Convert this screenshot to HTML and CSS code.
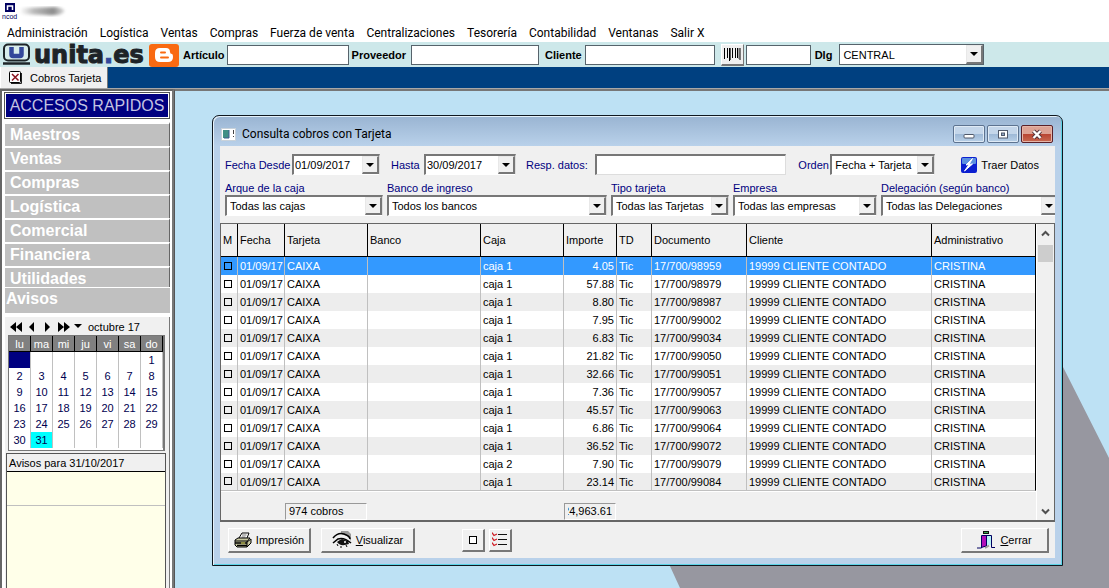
FILE: index.html
```html
<!DOCTYPE html>
<html lang="es">
<head>
<meta charset="utf-8">
<title>Cobros Tarjeta</title>
<link rel="stylesheet" href="styles.css">
</head>
<body>
<header class="app-title">
  <svg width="70" height="20" viewBox="0 0 70 20" aria-hidden="true">
    <defs>
      <linearGradient id="smear"><stop offset="0" stop-color="#fff"/><stop offset=".3" stop-color="#bbb"/><stop offset=".75" stop-color="#8c8c8c"/><stop offset="1" stop-color="#ddd"/></linearGradient>
      <filter id="soft"><feGaussianBlur stdDeviation="1.6"/></filter>
    </defs>
    <rect x="5" y="3" width="10" height="9" fill="#000060"/>
    <path d="M7.500 10V6h5v4" fill="none" stroke="#fff" stroke-width="1.500"/>
    <text x="2" y="19" class="brand-mini">ncod</text>
    <path d="M20 8L56 7Q68 9 63 13Q58 16 46 15L20 14Z" fill="url(#smear)" filter="url(#soft)"/>
  </svg>
</header>
<nav class="menubar">
  <a href="#">Administración</a><a href="#">Logística</a><a href="#">Ventas</a><a href="#">Compras</a><a href="#">Fuerza de venta</a><a href="#">Centralizaciones</a><a href="#">Tesorería</a><a href="#">Contabilidad</a><a href="#">Ventanas</a><a href="#">Salir X</a>
</nav>
<div class="toolbar">
  <svg class="logo" width="180" height="25" viewBox="0 0 180 25" role="img" aria-label="unita.es">
    <rect x="4" y="2.500" width="25" height="16" rx="4" fill="#d8ecec" stroke="#1d2327" stroke-width="2"/>
    <path d="M3 21.500H30" stroke="#1d2327" stroke-width="2.500"/>
    <path d="M11.500 5V12.500Q11.500 14 13 14H20Q21.500 14 21.500 12.500V5" fill="none" stroke="#33479b" stroke-width="4.500"/>
    <text x="34" y="21" class="brand">unita<tspan class="brand-dot">.</tspan>es</text>
    <rect x="149" y="2" width="30" height="23" rx="3" fill="#f96a12"/>
    <path d="M160 6H166Q170 6 170 10Q170 12 172 12Q173 12 173 15Q173 20 168 20H160Q155 20 155 15V11Q155 6 160 6Z" fill="#fff"/>
    <path d="M161 10.500H165M161 15.500H168" stroke="#f96a12" stroke-width="2" stroke-linecap="round"/>
  </svg>
  <label for="articulo">Artículo</label><input id="articulo" class="tb-input w-art" type="text">
  <label for="proveedor" class="gap-r">Proveedor</label><input id="proveedor" class="tb-input w-prov" type="text">
  <label for="cliente" class="gap-l">Cliente</label><input id="cliente" class="tb-input w-cli" type="text">
  <button class="barcode" type="button" aria-label="Código de barras">
    <svg width="17" height="13" viewBox="0 0 17 13"><path d="M.5 0V11M3.500 0V10M5.500 0V13M8.500 0V10M11.500 0V10M13.500 0V10M16 0V12" stroke="#000"/><path d="M6.500 0V12M15 0V11" stroke="#555"/></svg>
  </button>
  <input class="tb-input w-code" type="text" aria-label="Código">
  <label for="dlg">Dlg</label>
  <span class="combo combo-flat w-dlg"><select id="dlg"><option>CENTRAL</option></select><span class="arrow"></span></span>
</div>
<div class="tabs">
  <button class="tab" type="button">
    <svg width="13" height="13" viewBox="0 0 13 13"><rect x=".5" y=".5" width="11" height="11" rx="1" fill="#fff" stroke="#000"/><path d="M12.500 2V12.500H2" fill="none" stroke="#222"/><path d="M3 3L9.500 9.500M9.500 3L3 9.500" stroke="#8b1420" stroke-width="1.500"/></svg>
    Cobros Tarjeta
  </button>
</div>
<main class="workspace">
  <aside class="sidebar">
    <h1 class="quick">ACCESOS RAPIDOS</h1>
    <nav class="quick-list">
      <button type="button">Maestros</button><button type="button">Ventas</button><button type="button">Compras</button><button type="button">Logística</button><button type="button">Comercial</button><button type="button">Financiera</button><button type="button">Utilidades</button>
    </nav>
    <h2 class="notices">Avisos</h2>
    <section class="calendar">
      <div class="cal-nav">
        <button type="button" aria-label="Año anterior"><svg width="12" height="10"><path d="M6 0V10L0 5ZM12 0V10L6 5Z"/></svg></button>
        <button type="button" aria-label="Mes anterior"><svg width="12" height="10"><path d="M8 0V10L3 5Z"/></svg></button>
        <button type="button" aria-label="Mes siguiente"><svg width="12" height="10"><path d="M3 0V10L8 5Z"/></svg></button>
        <button type="button" aria-label="Año siguiente"><svg width="12" height="10"><path d="M0 0V10L6 5ZM6 0V10L12 5Z"/></svg></button>
        <button type="button" aria-label="Elegir mes"><svg width="8" height="10"><path d="M0 2H8L4 6Z"/></svg></button>
        <span>octubre 17</span>
      </div>
      <table class="cal">
        <thead><tr><th>lu</th><th>ma</th><th>mi</th><th>ju</th><th>vi</th><th>sa</th><th>do</th></tr></thead>
        <tbody>
          <tr><td class="cur"></td><td></td><td></td><td></td><td></td><td></td><td>1</td></tr>
          <tr><td>2</td><td>3</td><td>4</td><td>5</td><td>6</td><td>7</td><td>8</td></tr>
          <tr><td>9</td><td>10</td><td>11</td><td>12</td><td>13</td><td>14</td><td>15</td></tr>
          <tr><td>16</td><td>17</td><td>18</td><td>19</td><td>20</td><td>21</td><td>22</td></tr>
          <tr><td>23</td><td>24</td><td>25</td><td>26</td><td>27</td><td>28</td><td>29</td></tr>
          <tr><td>30</td><td class="today">31</td><td></td><td></td><td></td><td></td><td></td></tr>
        </tbody>
      </table>
      <div class="notes">
        <div class="notes-head">Avisos para 31/10/2017</div>
        <div class="notes-row"></div>
      </div>
    </section>
  </aside>
  <section class="desktop">
    <svg class="wallpaper" width="934" height="497" viewBox="0 0 934 497" aria-hidden="true"><path d="M494 473L505 497H934V367L888 276L800 100L400 100Z" fill="#9797a0"/></svg>
    <section class="window">
      <header class="win-title">
        <svg width="15" height="13" viewBox="0 0 15 13"><rect x=".5" y=".5" width="14" height="12" fill="#fff" stroke="#c9d2da"/><rect x="2" y="2" width="6" height="8" fill="#3f8f86"/><path d="M8 2V10H3" fill="none" stroke="#3a5a90"/><path d="M12.500 2V6M12.500 8V9" stroke="#444"/></svg>
        <h2>Consulta cobros con Tarjeta</h2>
        <button type="button" aria-label="Minimizar"><svg width="12" height="12"><rect x="1" y="6.500" width="10" height="3.500" rx="1" fill="#fff" stroke="#50596a"/></svg></button>
        <button type="button" aria-label="Maximizar"><svg width="12" height="12"><rect x="1.500" y="2.500" width="9" height="7.500" fill="#fff" stroke="#50596a"/><rect x="4.500" y="5" width="3" height="2.500" fill="#8fa6c4" stroke="#50596a"/></svg></button>
        <button type="button" class="close" aria-label="Cerrar ventana"><svg width="12" height="12"><path d="M2.500 3L9.500 10M9.500 3L2.500 10" stroke="#4c3038" stroke-width="4"/><path d="M2.500 3L9.500 10M9.500 3L2.500 10" stroke="#fff" stroke-width="2.400"/></svg></button>
      </header>
      <div class="win-body">
        <form class="filters">
          <div class="filter-row">
            <label for="desde" class="w-lab">Fecha Desde</label>
            <span class="combo w-date"><input id="desde" type="text" value="01/09/2017"><span class="arrow"></span></span>
            <label for="hasta" class="lab-hasta">Hasta</label>
            <span class="combo w-date2"><input id="hasta" type="text" value="30/09/2017"><span class="arrow"></span></span>
            <label for="resp" class="lab-resp">Resp. datos:</label>
            <input id="resp" class="sunken" type="text">
            <label for="orden" class="lab-orden">Orden</label>
            <span class="combo w-orden"><select id="orden"><option>Fecha + Tarjeta</option></select><span class="arrow"></span></span>
            <button type="button" class="fetch">
              <svg width="16" height="16" viewBox="0 0 16 16"><rect width="16" height="16" rx="2" fill="#0b1fd0"/><rect x="1" y="1" width="14" height="6" rx="1" fill="#5b8fe0"/><path d="M11.500 1.500L5 8L8 7.500L3.500 14L11.500 7L8 7.500Z" fill="#fff" stroke="#fff"/></svg>
              Traer Datos</button>
          </div>
          <div class="filter-row second">
            <div class="field w-f1"><label for="f1">Arque de la caja</label><span class="combo"><select id="f1"><option>Todas las cajas</option></select><span class="arrow"></span></span></div>
            <div class="field w-f2"><label for="f2">Banco de ingreso</label><span class="combo"><select id="f2"><option>Todos los bancos</option></select><span class="arrow"></span></span></div>
            <div class="field w-f3"><label for="f3">Tipo tarjeta</label><span class="combo"><select id="f3"><option>Todas las Tarjetas</option></select><span class="arrow"></span></span></div>
            <div class="field w-f4"><label for="f4">Empresa</label><span class="combo"><select id="f4"><option>Todas las empresas</option></select><span class="arrow"></span></span></div>
            <div class="field w-f5"><label for="f5">Delegación (según banco)</label><span class="combo"><select id="f5"><option>Todas las Delegaciones</option></select><span class="arrow"></span></span></div>
          </div>
        </form>
        <div class="grid-box">
          <div class="grid-main">
            <table class="grid">
              <colgroup><col class="c-m"><col class="c-fecha"><col class="c-tarj"><col class="c-banco"><col class="c-caja"><col class="c-imp"><col class="c-td"><col class="c-doc"><col><col class="c-adm"></colgroup>
              <thead><tr><th>M</th><th>Fecha</th><th>Tarjeta</th><th>Banco</th><th>Caja</th><th>Importe</th><th>TD</th><th>Documento</th><th>Cliente</th><th>Administrativo</th></tr></thead>
              <tbody id="rows"></tbody>
            </table>
            <div class="totals"><output class="total-count">974 cobros</output><output class="total-sum"><span>24,963.61</span></output></div>
          </div>
          <div class="scroll">
            <svg width="9" height="7"><path d="M1 5.500L4.500 2L8 5.500" fill="none" stroke="#505050" stroke-width="2"/></svg>
            <div class="thumb"></div>
            <svg width="9" height="7"><path d="M1 1.500L4.500 5L8 1.500" fill="none" stroke="#505050" stroke-width="2"/></svg>
          </div>
        </div>
        <footer class="actions">
          <button type="button" class="raised w-print">
            <svg width="18" height="16" viewBox="0 0 18 16"><path d="M5 6L8 1H15L13 6" fill="#fff" stroke="#000"/><path d="M8 3H12.500M7.500 5H11.500" stroke="#777"/><path d="M1 8L4 6H16L13.500 9H1ZM1 9V13L3 15H13V9M13 15L17 11V7L13 10" fill="#c8c8a0" stroke="#000"/><path d="M1 11H13M3 13.500H13" stroke="#000" stroke-width="1.500"/><path d="M7 11H11" stroke="#e6e65a"/></svg>
            Impresión</button>
          <button type="button" class="raised w-view">
            <svg width="20" height="17" viewBox="0 0 20 17"><path d="M9 0H16L19 3V10L15 5L9 3Z" fill="#999"/><path d="M1 7Q6 1 12 3T18 8" fill="none" stroke="#000" stroke-width="1.600"/><path d="M1 12L6 8Q12 6 19 12" fill="none" stroke="#000" stroke-width="1.600"/><path d="M5 11Q8 16 17 13L16 10L10 8L8 9Z" fill="#111"/><circle cx="13" cy="11" r="1" fill="#fff"/><path d="M5 13L6 15M9 15V17M14 14L15 16" stroke="#000"/></svg>
            <span><u>V</u>isualizar</span></button>
          <button type="button" class="raised square first" aria-label="Desmarcar todo"><svg width="10" height="10"><rect x="1.500" y="1.500" width="7" height="7" fill="#fff" stroke="#000"/></svg></button>
          <button type="button" class="raised square" aria-label="Marcar todo"><svg width="16" height="15" viewBox="0 0 16 15"><path d="M6 2.500H15M6 7.500H15M6 12.500H15" stroke="#111"/><path d="M0 .5L2 3.500L5 2M0 5.500L2 8.500L5 7M0 10.500L2 13.500L5 12" fill="none" stroke="#d01c24" stroke-width="1.300"/></svg></button>
          <button type="button" class="raised w-close">
            <svg width="18" height="18" viewBox="0 0 18 18"><rect x="6.500" y=".5" width="5" height="2" fill="#35b050" stroke="#111"/><path d="M0 17H4.500V4.500H14.500V16.500H18" fill="none" stroke="#000060"/><rect x="5" y="5" width="4" height="11" fill="#b010b8"/><rect x="9" y="5" width="5" height="9" fill="#b8f2f6"/><path d="M9.500 5V15M4.500 16.500L9 15" stroke="#000060"/><path d="M8 17L12 14.500" stroke="#999" stroke-width="2"/></svg>
            <span><u>C</u>errar</span></button>
        </footer>
      </div>
    </section>
  </section>
</main>
<script src="rows.js"></script>
</body>
</html>
```
FILE: rows.js
```js
const charges = [
  ["4.05", "98959"], ["57.88", "98979"], ["8.80", "98987"], ["7.95", "99002"],
  ["6.83", "99034"], ["21.82", "99050"], ["32.66", "99051"], ["7.36", "99057"],
  ["45.57", "99063"], ["6.86", "99064"], ["36.52", "99072"], ["7.90", "99079", "caja 2"],
  ["23.14", "99084"]
];
document.getElementById("rows").innerHTML = charges.map(([amount, doc, till = "caja 1"], i) =>
  `<tr${i ? "" : ' class="selected"'}><td><input type="checkbox" aria-label="Marcar ${doc}"></td><td>01/09/17</td><td>CAIXA</td><td></td><td>${till}</td><td class="num">${amount}</td><td>Tic</td><td>17/700/${doc}</td><td>19999 CLIENTE CONTADO</td><td>CRISTINA</td></tr>`
).join("");
```
FILE: styles.css
```css
* { box-sizing: border-box; }
body {
  margin: 0;
  height: 100vh;
  display: flex;
  flex-direction: column;
  overflow: hidden;
  background: #fff;
  color: #000;
  font: 11px/14px "Liberation Sans", Arial, sans-serif;
}
button, input, select { font: inherit; color: inherit; margin: 0; border-radius: 0; }
button { padding: 0; border: 0; background: none; }
h1, h2 { margin: 0; font-weight: normal; }
svg { flex: none; display: block; }

.app-title { height: 24px; }
.brand-mini { font: 7px "Liberation Sans", sans-serif; fill: #000060; }
.menubar {
  display: flex;
  gap: 12px;
  height: 18px;
  padding-left: 7px;
  align-items: center;
  font: 12px/18px Roboto, sans-serif;
}
.menubar a { color: #000; text-decoration: none; white-space: nowrap; }

.toolbar {
  display: flex;
  align-items: center;
  height: 25px;
  background: #cde8ea;
}
.toolbar label { font-weight: bold; margin: 0 2px 0 3px; }
.toolbar .gap-l { margin: 0 3px 0 6px; }
.toolbar .gap-r { margin-right: 5px; }
.logo { overflow: visible; }
.brand { font: bold 24px "DejaVu Sans", sans-serif; fill: #1d2327; stroke: #1d2327; stroke-width: 1px; }
.brand-dot { fill: #33479b; stroke: #33479b; }
.tb-input { height: 20px; border: 1px solid #56636b; background: #fff; padding: 0 3px; }
.w-art { width: 122px; }
.w-prov { width: 128px; }
.w-cli { width: 130px; }
.w-code { width: 65px; margin-right: 1px; }
.barcode {
  display: grid;
  place-items: center;
  width: 23px;
  height: 22px;
  margin: 0 2px 0 6px;
  background: #f0f0f0;
  border: 1px solid #fff;
  border-right-color: #777;
  border-bottom: 2px solid #777;
}
.w-dlg { width: 145px; margin-left: 5px; }

.combo {
  display: grid;
  height: 21px;
  background: #fff;
  border: 2px solid #777;
  border-right: 1px solid #ddd;
  border-bottom: 1px solid #fff;
}
.combo > * { grid-area: 1 / 1; min-width: 0; }
.combo select, .combo input {
  appearance: none;
  width: 100%;
  border: 0;
  background: none;
  padding: 0 18px 0 3px;
  outline: 0;
}
.combo input { padding-left: 1px; }
.combo-flat { border: 1px solid #56636b; }
.arrow {
  justify-self: end;
  display: grid;
  place-items: center;
  width: 17px;
  pointer-events: none;
  background: #f0f0f0;
  border: 1px solid #e8e8e8;
  border-right: 2px solid #777;
  border-bottom: 2px solid #777;
}
.arrow::before {
  content: "";
  border: 4px solid transparent;
  border-top-color: #000;
  border-bottom: 0;
}

.tabs { display: flex; height: 21px; background: #004080; }
.tab {
  display: flex;
  align-items: center;
  gap: 8px;
  padding: 0 6px 0 8px;
  background: #f0f0f0;
  border-right: 1px solid #777;
  border-left: 1px solid #fff;
}

.workspace {
  flex: 1;
  min-height: 0;
  display: flex;
  border-top: 1px solid #a8a8a8;
}
.sidebar {
  display: flex;
  flex-direction: column;
  width: 174px;
  flex: none;
  padding: 1px 2px 0 2px;
  border-top: 2px solid #666;
  border-left: 2px solid #666;
  border-right: 2px solid #777;
  background: #fff;
}
.quick {
  height: 27px;
  background: #000080;
  border: 1px solid #fff;
  outline: 1px solid #555;
  outline-offset: -1px;
  box-shadow: inset 0 0 0 1px #fff;
  color: #c3c3e2;
  text-align: center;
  font: 16px/26px "Liberation Sans Narrow", "Liberation Sans", sans-serif;
  white-space: nowrap;
}
.quick-list { display: flex; flex-direction: column; margin: 3px 0 0 1px; }
.quick-list button {
  height: 24px;
  border-top: 2px solid #fff;
  border-right: 1px solid #666;
  background: #c0c0c0;
  color: #fff;
  text-align: left;
  padding: 0 5px;
  font: bold 16px/22px "Liberation Sans", sans-serif;
}
.notices {
  height: 26px;
  margin: -3px 0 2px 1px;
  padding-left: 1px;
  border-top: 1px solid #fff;
  background: #c0c0c0;
  color: #fff;
  font: bold 16px/22px "Liberation Sans", sans-serif;
}
.calendar {
  flex: 1;
  display: flex;
  flex-direction: column;
  margin: 2px 0 0 1px;
  padding: 2px 3px 0 1px;
  background: #f0f0f0;
  border-right: 1px solid #777;
}
.cal-nav { display: flex; align-items: center; gap: 4px; height: 16px; padding-left: 4px; }
.cal-nav span { margin-left: 2px; }
.cal {
  margin-left: 2px;
  width: 157px;
  table-layout: fixed;
  border-collapse: separate;
  border-spacing: 0;
  padding-bottom: 2px;
  background: #fff;
  border: 1px solid #777;
  border-right-width: 2px;
  color: #000050;
}
.cal th {
  height: 16px;
  padding: 0;
  background: #808080;
  color: #fff;
  font-weight: normal;
  border-right: 1px solid #000;
  border-bottom: 1px solid #000;
}
.cal td { height: 16px; padding: 0; text-align: center; border-right: 1px solid #c0c0c0; }
.cal .cur { background: #000080; }
.cal .today { background: #00ffff; }
.notes { flex: 1; margin-top: 2px; border: 1px solid #555; border-bottom: 0; background: #ffffe9; }
.notes-head { height: 18px; padding-left: 2px; line-height: 18px; background: #f0f0f0; border-bottom: 1px solid #000; white-space: nowrap; }
.notes-row { height: 34px; border-bottom: 1px solid #c0c0c0; }

.desktop {
  position: relative;
  flex: 1;
  overflow: hidden;
  background: #bde1f4;
  border-top: 2px solid #777;
  border-left: 1px solid #555;
}
.wallpaper { position: absolute; right: 0; bottom: 0; }
.window {
  position: absolute;
  top: 24px;
  left: 37px;
  right: 46px;
  padding: 0 7px 7px;
  border: 1px solid #101820;
  border-radius: 7px 7px 0 0;
  background: linear-gradient(#99b4d2, #b9d1ea 30px);
  box-shadow: inset 1px 1px #e6f2fa, inset -1px -1px #5cd3e6;
}
.win-title { display: flex; align-items: center; gap: 2px; height: 30px; padding: 6px 2px 0 1px; }
.win-title h2 { flex: 1; margin-left: 4px; font: 12px/18px Roboto, sans-serif; }
.win-title button {
  display: grid;
  place-items: center;
  width: 32px;
  height: 18px;
  border: 1px solid #5d7390;
  border-radius: 2px;
  background: linear-gradient(#c4d6ea 50%, #9db8d6 50%, #b8d0e8);
  box-shadow: inset 0 0 0 1px #dfeaf5;
}
.win-title .close {
  border-color: #5a2028;
  background: linear-gradient(#dda294 50%, #b84432 50%, #c86a52);
  box-shadow: inset 0 0 0 1px #e5b5a8;
}
.win-body { background: #f0f0f0; overflow: hidden; }
.filters { padding: 8px 0 7px 5px; }
.filter-row { display: flex; align-items: center; color: #000080; white-space: nowrap; }
.filter-row .combo, .fetch { color: #000; }
.w-lab { width: 67px; }
.w-date { width: 88px; }
.w-date2 { width: 92px; }
.lab-hasta { margin: 0 4px 0 11px; width: 29px; }
.lab-resp { margin: 0 8px 0 10px; width: 61px; }
.sunken { flex: 1; min-width: 0; height: 21px; background: #fff; border: 2px solid #777; border-right: 1px solid #ddd; border-bottom: 1px solid #ddd; }
.lab-orden { margin-left: 12px; width: 32px; }
.w-orden { width: 105px; }
.fetch { display: flex; align-items: center; gap: 4px; margin: 0 16px 0 26px; }
.second { margin-top: 6px; gap: 4px; }
.field { display: flex; flex-direction: column; }
.w-f1 { width: 158px; }
.w-f2 { width: 220px; }
.w-f3 { width: 118px; }
.w-f4 { width: 144px; }
.w-f5 { flex: 1; margin-right: -4px; }

.grid-box { display: flex; border: 1px solid #666; border-width: 1px 1px 2px; }
.grid-main { flex: 1; min-width: 0; }
.grid { width: 100%; table-layout: fixed; border-collapse: separate; border-spacing: 0; }
.c-m { width: 17px; }
.c-fecha { width: 47px; }
.c-tarj { width: 83px; }
.c-banco { width: 113px; }
.c-caja { width: 83px; }
.c-imp { width: 53px; }
.c-td { width: 35px; }
.c-doc { width: 95px; }
.c-adm { width: 104px; }
.grid th {
  height: 33px;
  padding: 0 0 0 2px;
  text-align: left;
  font-weight: normal;
  border-right: 1px solid #000;
  border-bottom: 1px solid #000;
}
.grid td { height: 18px; padding: 0 2px; background: #fff; border-right: 1px solid #c0c0c0; white-space: nowrap; }
.grid tr:nth-child(odd) td { background: #ededed; }
.grid .selected td, .grid tr.selected:nth-child(odd) td { background: #3399ff; color: #fff; }
.grid td:last-child { border-right-color: #000; }
.grid tr:last-child td { border-bottom: 1px solid #c0c0c0; }
.grid .num { text-align: right; }
.grid input {
  appearance: none;
  display: block;
  width: 8px;
  height: 8px;
  border: 1px solid #000;
  margin: 0 0 1px 1px;
}
.totals { display: flex; height: 29px; padding: 11px 0 0 64px; border-top: 1px solid #fff; }
.total-count, .total-sum { height: 17px; line-height: 15px; border: 1px solid #999; border-right-color: #fff; border-bottom-color: #fff; }
.total-count { width: 82px; padding-left: 3px; }
.total-sum { display: flex; justify-content: flex-end; width: 52px; margin-left: 197px; padding: 0 3px; }
.total-sum span { width: 45px; overflow: hidden; direction: rtl; }
.scroll { display: flex; flex-direction: column; align-items: center; width: 18px; padding: 6px 0 5px; border-left: 1px solid #fff; }
.thumb { width: 15px; height: 17px; margin: 8px 0 auto; background: #cdcdcd; }

.actions { display: flex; align-items: center; gap: 4px; height: 36px; padding: 0 6px 0 8px; }
.raised {
  display: flex;
  align-items: center;
  justify-content: center;
  gap: 4px;
  height: 25px;
  background: #f0f0f0;
  border: 1px solid #fff;
  border-right: 2px solid #777;
  border-bottom: 2px solid #777;
}
.w-print { width: 83px; }
.w-view { width: 94px; margin-left: 6px; }
.square { width: 23px; height: 23px; }
.first { margin-left: 43px; }
.w-close { width: 88px; margin-left: auto; gap: 5px; }
```
